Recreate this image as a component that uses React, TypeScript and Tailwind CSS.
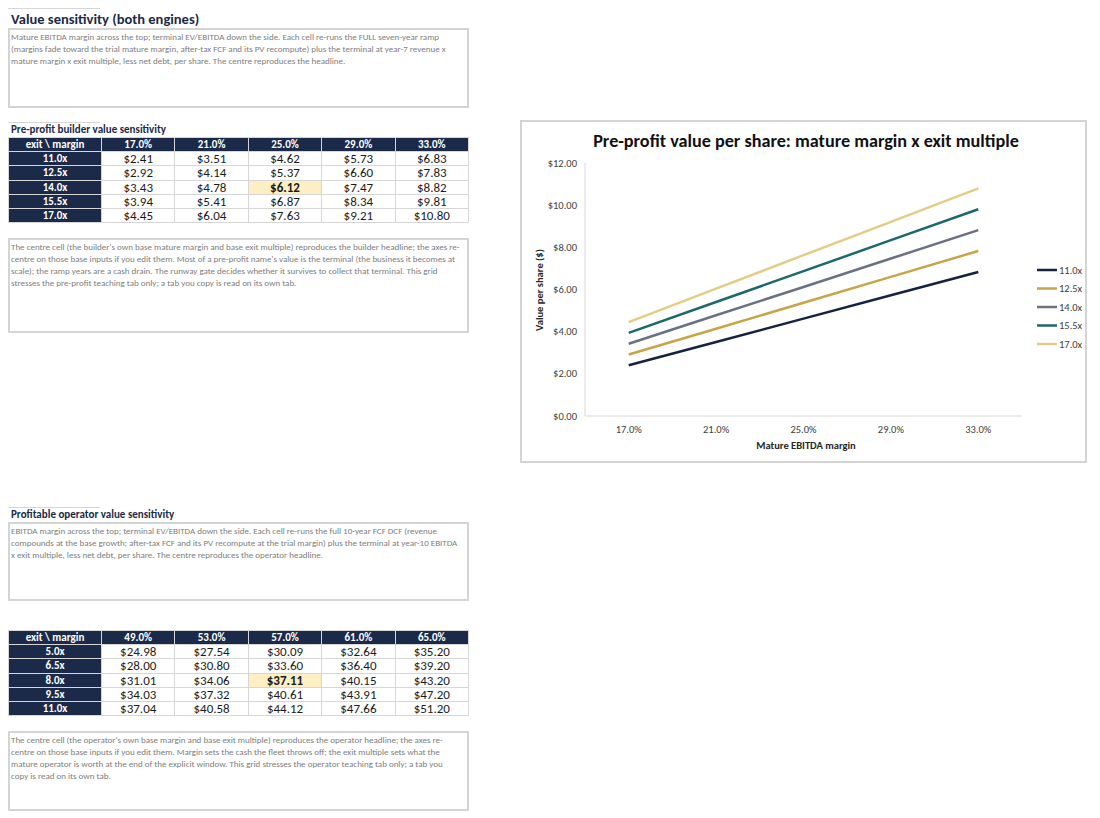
import React from "react"

const font = { fontFamily: "Carlito, Lato, 'Liberation Sans', sans-serif" }

type Table = { cols: string[]; rows: { label: string; vals: string[] }[]; hi: [number, number] }

const builder: Table = {
  cols: ["17.0%", "21.0%", "25.0%", "29.0%", "33.0%"],
  rows: [
    { label: "11.0x", vals: ["$2.41", "$3.51", "$4.62", "$5.73", "$6.83"] },
    { label: "12.5x", vals: ["$2.92", "$4.14", "$5.37", "$6.60", "$7.83"] },
    { label: "14.0x", vals: ["$3.43", "$4.78", "$6.12", "$7.47", "$8.82"] },
    { label: "15.5x", vals: ["$3.94", "$5.41", "$6.87", "$8.34", "$9.81"] },
    { label: "17.0x", vals: ["$4.45", "$6.04", "$7.63", "$9.21", "$10.80"] },
  ],
  hi: [2, 2],
}

const operator: Table = {
  cols: ["49.0%", "53.0%", "57.0%", "61.0%", "65.0%"],
  rows: [
    { label: "5.0x", vals: ["$24.98", "$27.54", "$30.09", "$32.64", "$35.20"] },
    { label: "6.5x", vals: ["$28.00", "$30.80", "$33.60", "$36.40", "$39.20"] },
    { label: "8.0x", vals: ["$31.01", "$34.06", "$37.11", "$40.15", "$43.20"] },
    { label: "9.5x", vals: ["$34.03", "$37.32", "$40.61", "$43.91", "$47.20"] },
    { label: "11.0x", vals: ["$37.04", "$40.58", "$44.12", "$47.66", "$51.20"] },
  ],
  hi: [2, 2],
}

function SensTable({ t }: { t: Table }) {
  const head = "bg-[#1c2a4a] text-white font-bold text-[11px] leading-none flex items-center justify-center"
  return (
    <div className="grid grid-cols-[92px_repeat(5,1fr)] grid-rows-6 h-[86px] gap-px p-px bg-[#d6d6d6]">
      <div className={head}>exit \ margin</div>
      {t.cols.map((c) => (
        <div key={c} className={head}>{c}</div>
      ))}
      {t.rows.map((r, ri) => (
        <React.Fragment key={r.label}>
          <div className={head}>{r.label}</div>
          {r.vals.map((v, ci) => {
            const hi = ri === t.hi[0] && ci === t.hi[1]
            return (
              <div key={ci} className={"flex items-center justify-center text-[13px] leading-none text-[#1a1a1a] " + (hi ? "bg-[#fdeec3] font-bold" : "bg-white")}>
                {v}
              </div>
            )
          })}
        </React.Fragment>
      ))}
    </div>
  )
}

// lines are broken by hand so the wrap follows the sheet
function Note({ lines, h }: { lines: string[]; h: string }) {
  return (
    <div className={"border-2 border-[#d4d4d4] px-[1px] pt-[1px] text-[9px] leading-[12px] text-[#7d7d7d] " + h}>
      {lines.map((l, i) => (
        <div key={i} className="whitespace-nowrap">{l}</div>
      ))}
    </div>
  )
}

function SectionTitle({ text, big }: { text: string; big?: boolean }) {
  return (
    <div>
      <div className="w-[92px] h-px bg-[#d6d6d6]" />
      <div className={"font-bold text-[#1c2a4a] px-[3px] " + (big ? "text-[14.5px] leading-[18px] pt-[1px]" : "text-[11px] leading-[14px]")}>{text}</div>
    </div>
  )
}

const series = [
  { name: "11.0x", color: "#16223f", vals: [2.41, 3.51, 4.62, 5.73, 6.83] },
  { name: "12.5x", color: "#c8a448", vals: [2.92, 4.14, 5.37, 6.6, 7.83] },
  { name: "14.0x", color: "#6a7183", vals: [3.43, 4.78, 6.12, 7.47, 8.82] },
  { name: "15.5x", color: "#1d6868", vals: [3.94, 5.41, 6.87, 8.34, 9.81] },
  { name: "17.0x", color: "#e2cc86", vals: [4.45, 6.04, 7.63, 9.21, 10.8] },
]

function Chart() {
  const x0 = 65
  const y0 = 296
  const step = 87.4
  const px = (i: number) => x0 + step / 2 + step * i
  const py = (v: number) => y0 - v * 21.08
  const ticks = [0, 2, 4, 6, 8, 10, 12]
  return (
    <div className="w-[567px] h-[343px] border-2 border-[#d4d4d4] bg-white">
      <svg width="563" height="339" viewBox="2 2 563 339" style={font}>
        <text x={286} y={27} textAnchor="middle" fontSize="18.2" fontWeight="700" fill="#111">
          Pre-profit value per share: mature margin x exit multiple
        </text>
        <line x1={x0} y1={43} x2={x0} y2={y0} stroke="#d9d9d9" strokeWidth="1" />
        <line x1={x0} y1={y0} x2={502} y2={y0} stroke="#d9d9d9" strokeWidth="1" />
        {ticks.map((t) => (
          <text key={t} x={57} y={py(t) + 3.5} textAnchor="end" fontSize="10.5" fill="#404040">
            ${t.toFixed(2)}
          </text>
        ))}
        {builder.cols.map((c, i) => (
          <text key={c} x={px(i)} y={313} textAnchor="middle" fontSize="10.5" fill="#404040">
            {c}
          </text>
        ))}
        <text x={286} y={329} textAnchor="middle" fontSize="10.5" fontWeight="700" fill="#262626">
          Mature EBITDA margin
        </text>
        <text x={0} y={0} transform="translate(23 170) rotate(-90)" textAnchor="middle" fontSize="10.5" fontWeight="700" fill="#262626">
          Value per share ($)
        </text>
        {series.map((s) => (
          <polyline
            key={s.name}
            points={s.vals.map((v, i) => `${px(i)},${py(v)}`).join(" ")}
            fill="none"
            stroke={s.color}
            strokeWidth="2.5"
          />
        ))}
        {series.map((s, i) => (
          <g key={s.name}>
            <line x1={517} y1={150 + i * 18.5} x2={537} y2={150 + i * 18.5} stroke={s.color} strokeWidth="2.5" />
            <text x={539} y={150 + i * 18.5 + 3.5} fontSize="10.5" fill="#404040">
              {s.name}
            </text>
          </g>
        ))}
      </svg>
    </div>
  )
}

export default function App() {
  return (
    <div className="w-[1100px] h-[818px] bg-white flex items-start pt-[8px] pl-[8px]" style={font}>
      <div className="w-[461px] flex flex-col">
        <SectionTitle text="Value sensitivity (both engines)" big />
        <Note
          h="h-[80px]"
          lines={[
            "Mature EBITDA margin across the top; terminal EV/EBITDA down the side. Each cell re-runs the FULL seven-year ramp",
            "(margins fade toward the trial mature margin, after-tax FCF and its PV recompute) plus the terminal at year-7 revenue x",
            "mature margin x exit multiple, less net debt, per share. The centre reproduces the headline.",
          ]}
        />
        <div className="h-[14px]" />
        <SectionTitle text="Pre-profit builder value sensitivity" />
        <SensTable t={builder} />
        <div className="h-[15px]" />
        <Note
          h="h-[95px]"
          lines={[
            "The centre cell (the builder's own base mature margin and base exit multiple) reproduces the builder headline; the axes re-",
            "centre on those base inputs if you edit them. Most of a pre-profit name's value is the terminal (the business it becomes at",
            "scale); the ramp years are a cash drain. The runway gate decides whether it survives to collect that terminal. This grid",
            "stresses the pre-profit teaching tab only; a tab you copy is read on its own tab.",
          ]}
        />
        <div className="h-[174px]" />
        <SectionTitle text="Profitable operator value sensitivity" />
        <Note
          h="h-[79px]"
          lines={[
            "EBITDA margin across the top; terminal EV/EBITDA down the side. Each cell re-runs the full 10-year FCF DCF (revenue",
            "compounds at the base growth; after-tax FCF and its PV recompute at the trial margin) plus the terminal at year-10 EBITDA",
            "x exit multiple, less net debt, per share. The centre reproduces the operator headline.",
          ]}
        />
        <div className="h-[29px]" />
        <SensTable t={operator} />
        <div className="h-[15px]" />
        <Note
          h="h-[80px]"
          lines={[
            "The centre cell (the operator's own base margin and base exit multiple) reproduces the operator headline; the axes re-",
            "centre on those base inputs if you edit them. Margin sets the cash the fleet throws off; the exit multiple sets what the",
            "mature operator is worth at the end of the explicit window. This grid stresses the operator teaching tab only; a tab you",
            "copy is read on its own tab.",
          ]}
        />
      </div>
      <div className="ml-[51px] mt-[112px]">
        <Chart />
      </div>
    </div>
  )
}
